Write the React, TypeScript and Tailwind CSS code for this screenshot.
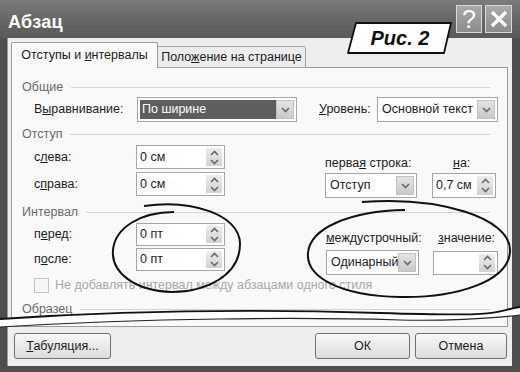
import React from "react";

// маленькие стрелки для списков и счётчиков
function ChevronDown() {
  return (
    <svg width="9" height="6" viewBox="0 0 9 6">
      <path d="M1 1 L4.5 4.5 L8 1" fill="none" stroke="#6a6a6a" strokeWidth="1.6" />
    </svg>
  );
}

function ChevronUp() {
  return (
    <svg width="9" height="6" viewBox="0 0 9 6">
      <path d="M1 5 L4.5 1.5 L8 5" fill="none" stroke="#6a6a6a" strokeWidth="1.6" />
    </svg>
  );
}

function Select({ value, w, selected }: { value: string; w: string; selected?: boolean }) {
  return (
    <div className={`${w} h-[25px] flex border border-[#a7a7a7] bg-white p-[2px]`}>
      <div
        className={`flex-1 flex items-center pl-[2px] whitespace-nowrap overflow-hidden ${selected ? "bg-[#5e5e5e] text-white" : ""}`}
      >
        <span>{value}</span>
      </div>
      <div className="w-[18px] flex items-center justify-center bg-gradient-to-b from-[#e4e4e4] to-[#c9c9c9] border border-[#c2c2c2]">
        <ChevronDown />
      </div>
    </div>
  );
}

function Spin({ value, w = "w-[89px]", h = "h-[24px]" }: { value: string; w?: string; h?: string }) {
  return (
    <div className={`${w} ${h} flex border border-[#a7a7a7] bg-white`}>
      <div className="flex-1 flex items-center pl-[3px] whitespace-nowrap">
        <span>{value}</span>
      </div>
      <div className="w-[16px] my-[2px] mr-[2px] flex flex-col items-center justify-center gap-[3px] bg-gradient-to-b from-[#ececec] to-[#d2d2d2]">
        <ChevronUp />
        <ChevronDown />
      </div>
    </div>
  );
}

function Group({ title }: { title: string }) {
  return (
    <div className="flex items-center h-[14px] pr-[17px] text-[#6a6a6a]">
      <span className="mr-[8px]">{title}</span>
      <div className="flex-1 h-px bg-[#d4d4d4]" />
    </div>
  );
}

export default function App() {
  return (
    <div className="relative w-[520px] h-[372px] overflow-hidden bg-[#4e4e4e] font-['Liberation_Sans',sans-serif] text-[12.5px] leading-none text-[#1c1c1c]">
      {/* заголовок окна */}
      <div className="flex h-[38px] justify-between bg-gradient-to-b from-[#7c7c7c] via-[#676767] to-[#5a5a5a] pl-[8px] pr-[8px]">
        <span className="mt-[13px] text-[18px] font-bold text-white tracking-[0.3px]">Абзац</span>
        <div className="flex gap-[3px] mt-[5px] h-[28px]">
          <div className="w-[26px] flex items-center justify-center border border-[#d8d8d8] bg-gradient-to-b from-[#a9a9a9] to-[#8c8c8c] text-white text-[25px]">
            ?
          </div>
          <div className="w-[27px] flex items-center justify-center border border-[#d8d8d8] bg-gradient-to-b from-[#a9a9a9] to-[#8c8c8c]">
            <svg width="20" height="20" viewBox="0 0 20 20">
              <path d="M3 3 L17 17 M17 3 L3 17" stroke="white" strokeWidth="3.2" />
            </svg>
          </div>
        </div>
      </div>

      {/* тело диалога */}
      <div className="ml-[7px] w-[505px] h-[328px] bg-[#eeeeee] border-l border-[#9a9a9a] pl-[3px] pt-[5px]">
        {/* вкладки */}
        <div className="flex items-end h-[25px] relative z-10">
          <div className="w-[147px] h-[26px] flex items-center justify-center bg-[#f9f9f9] border border-b-0 border-[#9c9c9c] rounded-t-[2px] whitespace-nowrap">
            <span>Отступы и <u>и</u>нтервалы</span>
          </div>
          <div className="w-[148px] h-[22px] flex items-center justify-center bg-[#ececec] border border-l-0 border-[#a4a4a4] rounded-tr-[2px] whitespace-nowrap">
            <span>Поло<u>ж</u>ение на странице</span>
          </div>
        </div>

        {/* панель */}
        <div className="w-[497px] h-[260px] -mt-px border border-[#9c9c9c] bg-[#f9f9f9] pl-[10px] pt-[12px] flex flex-col">
          <Group title="Общие" />
          <div className="flex items-center mt-[3px] pl-[12px]">
            <span className="w-[103px]">В<u>ы</u>равнивание:</span>
            <Select value="По ширине" w="w-[160px]" selected />
            <span className="ml-[22px] w-[58px]"><u>У</u>ровень:</span>
            <Select value="Основной текст" w="w-[121px]" />
          </div>

          <div className="mt-[5px]">
            <Group title="Отступ" />
          </div>
          <div className="flex mt-[4px] pl-[12px] h-[53px]">
            <div className="flex flex-col gap-[3px]">
              <div className="flex items-center">
                <span className="w-[102px]">с<u>л</u>ева:</span>
                <Spin value="0 см" />
              </div>
              <div className="flex items-center">
                <span className="w-[102px]">с<u>п</u>рава:</span>
                <Spin value="0 см" />
              </div>
            </div>
            <div className="ml-[100px] flex flex-col justify-end">
              <div className="flex mb-[4px]">
                <span className="w-[128px]">перва<u>я</u> строка:</span>
                <span><u>н</u>а:</span>
              </div>
              <div className="flex items-center gap-[15px]">
                <Select value="Отступ" w="w-[92px]" />
                <Spin value="0,7 см" w="w-[64px]" h="h-[25px]" />
              </div>
            </div>
          </div>

          <div className="mt-[7px]">
            <Group title="Интервал" />
          </div>
          <div className="flex mt-[4px] pl-[12px] h-[52px]">
            <div className="flex flex-col gap-[2px]">
              <div className="flex items-center">
                <span className="w-[102px]">п<u>е</u>ред:</span>
                <Spin value="0 пт" h="h-[23px]" />
              </div>
              <div className="flex items-center">
                <span className="w-[102px]">п<u>о</u>сле:</span>
                <Spin value="0 пт" h="h-[23px]" />
              </div>
            </div>
            <div className="ml-[101px] flex flex-col justify-end">
              <div className="flex mb-[6px]">
                <span className="w-[112px]"><u>м</u>еждустрочный:</span>
                <span><u>з</u>начение:</span>
              </div>
              <div className="flex items-center gap-[14px]">
                <Select value="Одинарный" w="w-[93px]" />
                <Spin value="" w="w-[65px]" h="h-[24px]" />
              </div>
            </div>
          </div>

          <div className="flex items-center mt-[3px] pl-[12px] text-[#a8a8a8]">
            <div className="w-[15px] h-[15px] border border-[#c4c4c4] bg-[#f6f6f6] mr-[6px]" />
            <span>Не добавлять интервал между абзацами одного стиля</span>
          </div>

          <div className="mt-[9px]">
            <Group title="Образец" />
          </div>
        </div>

        {/* кнопки */}
        <div className="flex mt-[6px] pl-[3px] pr-[5px]">
          <button className="w-[97px] h-[26px] rounded-[3px] border border-[#707070] bg-gradient-to-b from-[#f8f8f8] to-[#dcdcdc]">
            <u>Т</u>абуляция...
          </button>
          <button className="ml-auto w-[95px] h-[26px] rounded-[3px] border border-[#707070] bg-gradient-to-b from-[#f8f8f8] to-[#dcdcdc]">
            ОК
          </button>
          <button className="ml-[5px] w-[92px] h-[26px] rounded-[3px] border border-[#707070] bg-gradient-to-b from-[#f8f8f8] to-[#dcdcdc]">
            Отмена
          </button>
        </div>
      </div>

      {/* пометки поверх снимка: разрыв, овалы, подпись */}
      <svg className="absolute inset-0 pointer-events-none" width="520" height="372" viewBox="0 0 520 372">
        <path
          d="M0 319 C 120 311, 250 309, 380 313 S 490 312, 520 307 L 520 315 C 490 319, 440 321, 400 320 C 300 317, 150 318, 0 327 Z"
          fill="white"
        />
        <path d="M0 319 C 120 311, 250 309, 380 313 S 490 312, 520 307" fill="none" stroke="#111" strokeWidth="1.8" />
        <path d="M0 327 C 150 318, 300 317, 400 320 C 440 321, 490 319, 520 315" fill="none" stroke="#222" strokeWidth="1.2" />

        <path
          d="M144 206 C 190 199, 240 214, 240 244 C 240 276, 205 292, 172 292 C 134 291, 111 272, 113 250 C 115 228, 140 212, 174 212"
          fill="none"
          stroke="#111"
          strokeWidth="2"
        />
        <path
          d="M362 202 C 440 196, 510 218, 510 250 C 510 282, 455 298, 400 297 C 340 296, 306 277, 308 253 C 310 228, 350 211, 405 210"
          fill="none"
          stroke="#111"
          strokeWidth="2"
        />
      </svg>

      <div className="absolute left-[347px] top-[22px] w-[106px] h-[32px]">
        <svg className="absolute inset-0" width="106" height="32" viewBox="0 0 106 32">
          <path d="M9 1 L104 1 L97 31 L1 31 Z" fill="white" stroke="#111" strokeWidth="1.8" strokeLinejoin="round" />
        </svg>
        <div className="relative h-full flex items-center justify-center text-[20px] font-bold italic text-[#111]">
          Рис. 2
        </div>
      </div>
    </div>
  );
}
